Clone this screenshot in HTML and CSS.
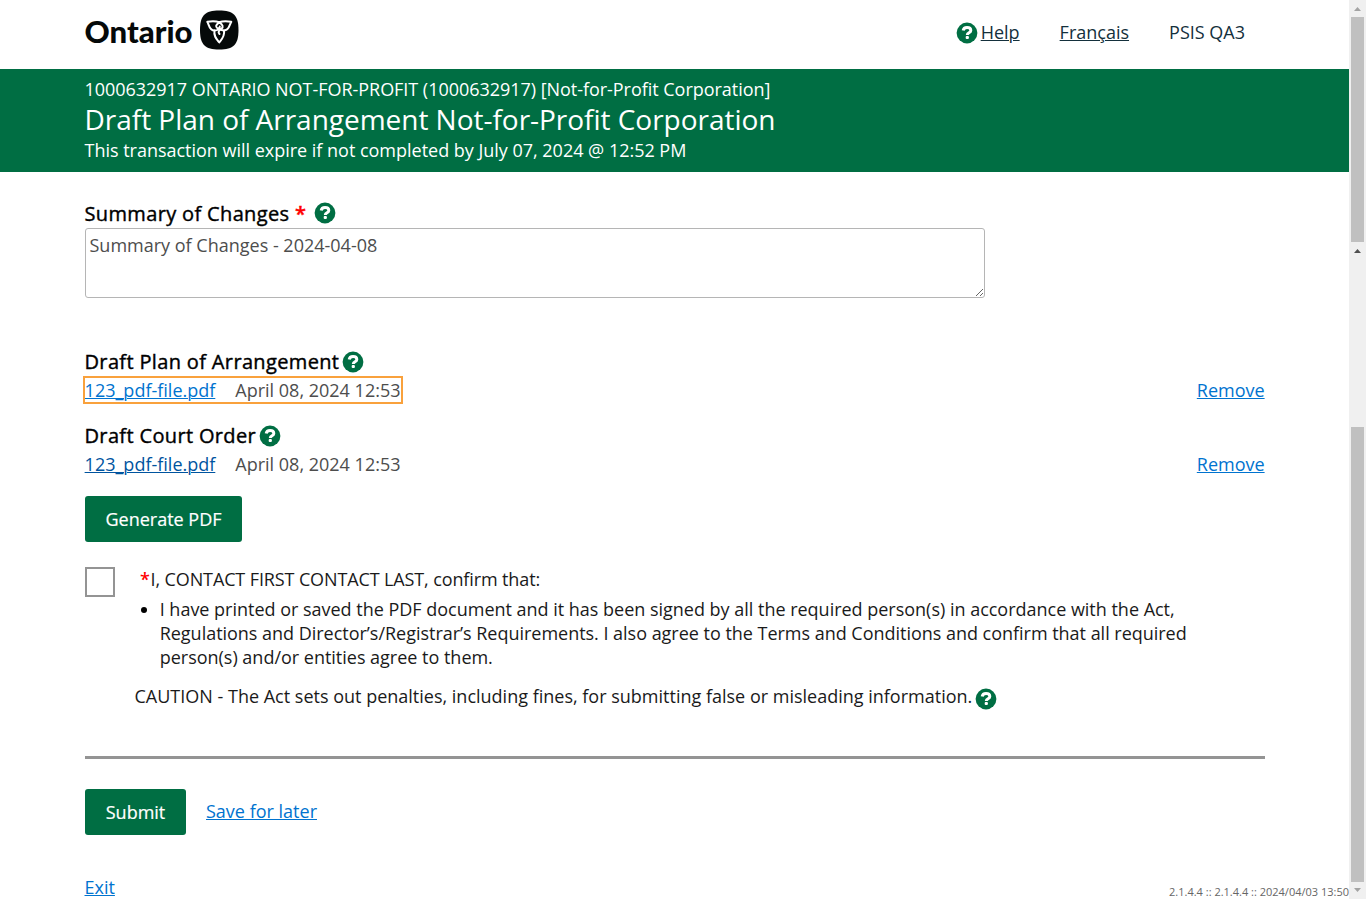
FILE: index.html
```
<!DOCTYPE html>
<html lang="en">
<head>
<meta charset="utf-8">
<title>Draft Plan of Arrangement</title>
<link rel="stylesheet" href="styles.css">
</head>
<body>
<svg class="defs" width="0" height="0">
  <symbol id="help" viewBox="0 0 22 22">
    <circle cx="11" cy="11" r="10.400" fill="#006e43"/>
    <path d="M7.200 8.500C7.500 6.400 9 5.500 11 5.500c2.300 0 3.800 1.100 3.800 2.900 0 2.400-3.500 2.200-3.500 4.500" fill="none" stroke="#fff" stroke-width="3"/>
    <rect x="9.700" y="14.100" width="3.200" height="3" rx="1" fill="#fff"/>
  </symbol>
</svg>
<div class="window">
  <div class="page">
    <header class="top">
      <svg class="logo" width="156" height="46" viewBox="0 0 156 46">
        <text class="wordmark" x="-0.500" y="35" textLength="108" lengthAdjust="spacingAndGlyphs">Ontario</text>
        <path d="M134.200 2.500C148.500 2.500 153.500 7.500 153.500 22s-5 19.500-19.300 19.500S115 36.500 115 22 120 2.500 134.200 2.500z" fill="#050909"/>
        <g fill="none" stroke="#fff" stroke-width="2" stroke-linejoin="round" stroke-linecap="round">
          <path d="M134.300 14.300C130.500 12.800 126.500 13 122.300 13.800 124 16 124 22.500 129.500 22.500c3 0 5-1.500 5.300-4"/>
          <path d="M134.300 14.300C138 12.800 142 13 146.300 13.800 144.500 16 144.500 22.500 139 22.500c-2.200 0-3.800-1-4.700-2.700"/>
          <path d="M134.300 14.300C130.800 16.500 130.200 19 132.500 20.300M134.300 14.300C138 16.500 138.500 19 136.500 20.800c-2.500 1.800-4 3-2 5.200"/>
          <path d="M129.500 22.500C128.500 28 131.500 31 134.300 34.500 137 31 140 28 139 22.500"/>
        </g>
      </svg>
      <nav class="nav">
        <span class="nav-help"><svg class="icon"><use href="#help"/></svg><a>Help</a></span>
        <a>Français</a>
        <span>PSIS QA3</span>
      </nav>
    </header>
    <section class="banner">
      <div class="b1">1000632917 ONTARIO NOT-FOR-PROFIT (1000632917) [Not-for-Profit Corporation]</div>
      <h1 class="b2">Draft Plan of Arrangement Not-for-Profit Corporation</h1>
      <div class="b3">This transaction will expire if not completed by July 07, 2024 @ 12:52 PM</div>
    </section>
    <main class="content">
      <div class="label summary-label"><span>Summary of Changes <span class="req">*</span></span><svg class="icon"><use href="#help"/></svg></div>
      <textarea class="summary">Summary of Changes - 2024-04-08</textarea>
      <div class="label plan-label"><span>Draft Plan of Arrangement</span><svg class="icon"><use href="#help"/></svg></div>
      <div class="file-row"><div class="file focused"><a>123_pdf-file.pdf</a><span>April 08, 2024 12:53</span></div><a>Remove</a></div>
      <div class="label order-label"><span>Draft Court Order</span><svg class="icon"><use href="#help"/></svg></div>
      <div class="file-row"><div class="file"><a class="dark">123_pdf-file.pdf</a><span>April 08, 2024 12:53</span></div><a>Remove</a></div>
      <button class="btn generate">Generate PDF</button>
      <div class="confirm">
        <span class="box"></span>
        <div class="terms">
          <p class="who"><span class="req">*</span>I, CONTACT FIRST CONTACT LAST, confirm that:</p>
          <ul class="list"><li><span class="l1">I have printed or saved the PDF document and it has been signed by all the required person(s) in accordance with the Act,</span><br><span class="l2">Regulations and Director’s/Registrar’s Requirements. I also agree to the Terms and Conditions and confirm that all required</span><br><span class="l3">person(s) and/or entities agree to them.</span></li></ul>
          <div class="caution"><span>CAUTION - The Act sets out penalties, including fines, for submitting false or misleading information.</span><svg class="icon"><use href="#help"/></svg></div>
        </div>
      </div>
      <hr class="rule">
      <div class="actions"><button class="btn submit">Submit</button><a class="save">Save for later</a></div>
      <div class="foot"><a>Exit</a><span class="version">2.1.4.4 :: 2.1.4.4 :: 2024/04/03 13:50</span></div>
    </main>
  </div>
  <div class="scroll">
    <svg class="arrow" viewBox="0 0 17 17"><path d="M5 11h7L8.500 7z" fill="#a3a3a3"/></svg>
    <div class="thumb first"></div>
    <svg class="arrow" viewBox="0 0 17 17"><path d="M5 11h7L8.500 7z" fill="#505050"/></svg>
    <div class="gap"></div>
    <div class="thumb second"></div>
    <svg class="arrow" viewBox="0 0 17 17"><path d="M5 6h7L8.500 10z" fill="#a3a3a3"/></svg>
  </div>
</div>
</body>
</html>
```
FILE: styles.css
```
* { box-sizing: border-box; }
body { margin: 0; overflow: hidden; background: #fff; font: 18px/24px "Open Sans", "Noto Sans", sans-serif; color: #1a1a1a; }
.defs { display: block; }
.window { display: flex; height: 899px; }
.page { width: 1349px; display: flex; flex-direction: column; white-space: nowrap; }
a { color: #0073cf; text-decoration: underline; text-decoration-thickness: 1px; }
.icon { width: 22px; height: 22px; flex: none; }
.top { height: 69px; padding: 8px 104px 0 85px; display: flex; justify-content: space-between; }
.logo { flex: none; overflow: visible; }
.wordmark { font: 900 30px Lato, sans-serif; fill: #050909; }
.nav { display: flex; gap: 40px; padding-top: 12px; height: 38px; }
.nav a, .nav span { color: #14303c; }
.nav-help { display: flex; gap: 3px; }
.nav-help .icon { margin-top: 2px; }
.banner { height: 103px; background: #006e43; color: #fff; padding: 8px 0 0 84.500px; }
.b1 { height: 24px; letter-spacing: -0.035px; }
.b2 { margin: 0; font-size: 28px; line-height: 36px; font-weight: 400; height: 37px; letter-spacing: -0.025px; }
.b3 { height: 24px; letter-spacing: -0.015px; }
.content { padding: 30px 0 0 85px; display: flex; flex-direction: column; flex: 1; }
.label { display: flex; gap: 3px; height: 24px; font-size: 20px; letter-spacing: 0.35px; color: #000; -webkit-text-stroke: 0.4px currentColor; }
.label .icon { margin-top: 1px; }
.label > span { margin-left: -0.500px; }
.req { color: #f00; font-weight: 600; }
.summary-label { gap: 8px; height: 26px; }
.summary-label .icon { margin-top: 0; }
.summary { width: 900px; height: 70px; margin: 0; border: 1px solid #b5b5b5; border-radius: 3px; padding: 4px 4px 4px 3.500px; font: inherit; color: #4d4d4d; resize: vertical; overflow: hidden; }
.plan-label { margin-top: 52px; }
.order-label { margin-top: 20px; }
.file-row { display: flex; justify-content: space-between; width: 1180px; height: 30px; padding-top: 4px; margin-left: -0.400px; }
.file { display: flex; gap: 20px; color: #4d4d4d; height: 24px; }
.focused { outline: 2px solid #f9a13c; }
.dark { color: #00549f; }
.btn { border: 0; border-radius: 3px; background: #006e43; color: #fff; font: 18px "Open Sans", sans-serif; height: 46px; padding: 0; -webkit-text-stroke: 0.200px currentColor; }
.generate { width: 157px; margin-top: 18px; flex: none; }
.confirm { display: flex; margin-top: 25px; height: 189px; flex: none; }
.box { width: 30px; height: 30px; border: 2px solid #949494; flex: none; }
.terms { padding-left: 20px; }
.who { margin: 0 0 6px 5px; letter-spacing: -0.120px; }
.who .req { letter-spacing: 0.700px; }
.list { margin: 0; padding: 0 0 0 24.700px; }
.list li::marker { color: #000; }
.l1 { letter-spacing: -0.013px; }
.l2 { letter-spacing: -0.022px; }
.l3 { letter-spacing: -0.012px; }
.caution { display: flex; gap: 3px; margin-top: 15px; margin-left: -0.500px; }
.caution .icon { margin-top: 4px; }
.rule { margin: 0; border: 0; width: 1180px; height: 3px; background: #949494; flex: none; }
.actions { display: flex; gap: 20px; margin-top: 30px; height: 46px; flex: none; }
.submit { width: 101px; }
.save { padding-top: 10px; }
.foot { margin-top: 40px; margin-left: -0.500px; display: flex; justify-content: space-between; }
.version { font-size: 11px; line-height: 14px; padding-top: 10px; color: #666; }
.scroll { width: 17px; background: #f0f0f0; display: flex; flex-direction: column; }
.arrow { width: 17px; height: 17px; flex: none; }
.thumb { width: 13px; margin-left: 2px; background: #c0c0c0; }
.first { height: 225px; }
.gap { height: 168px; }
.second { height: 455px; }
```
